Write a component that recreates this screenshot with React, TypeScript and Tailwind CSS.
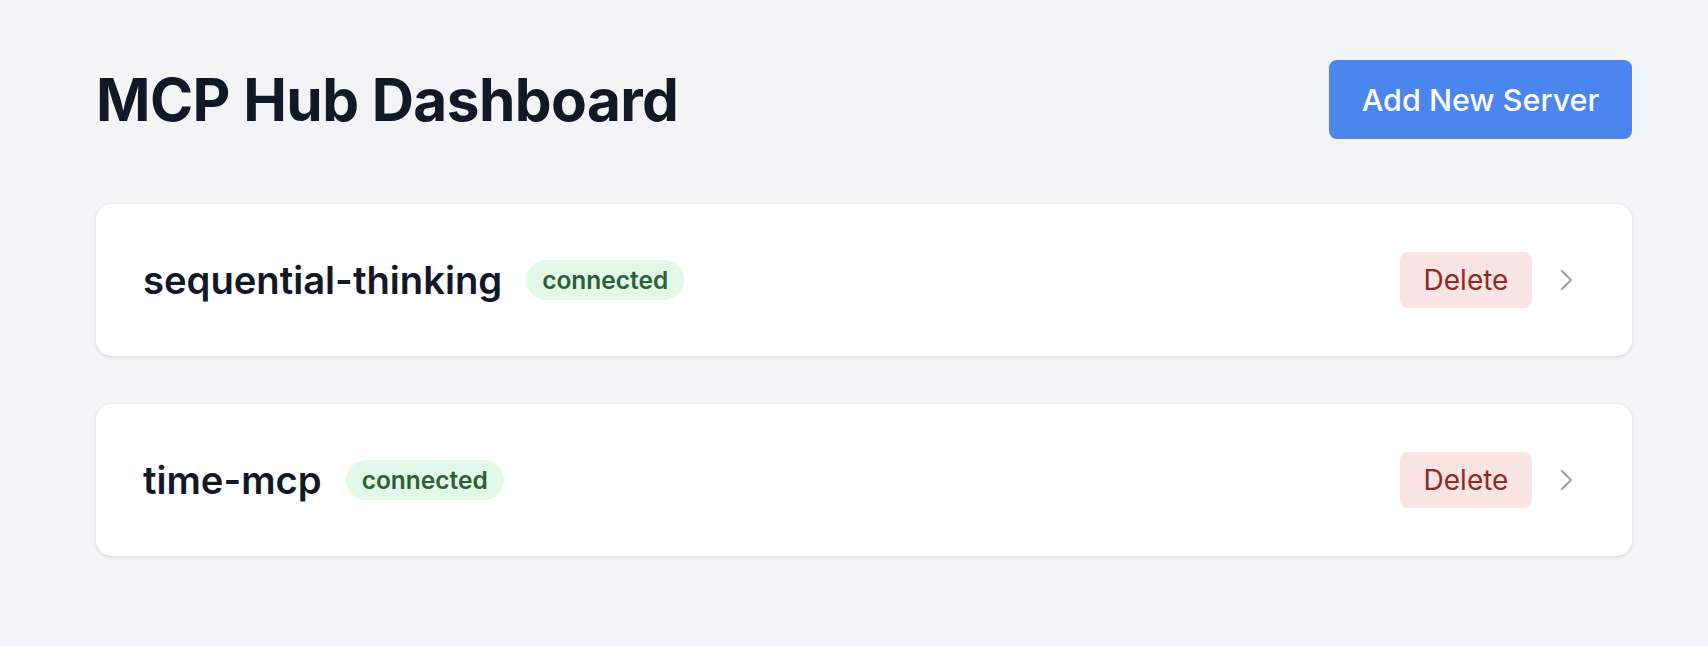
import React from "react";

type Server = { name: string; status: string };

const servers: Server[] = [
  { name: "sequential-thinking", status: "connected" },
  { name: "time-mcp", status: "connected" },
];

function Chevron() {
  return (
    <svg width="14" height="24" viewBox="0 0 14 24" fill="none" className="shrink-0">
      <path d="M2 3l9 9-9 9" stroke="#a3a3a3" strokeWidth="2.4" strokeLinecap="round" strokeLinejoin="round" />
    </svg>
  );
}

function ServerCard({ server }: { server: Server }) {
  return (
    <div className="flex h-[152px] items-center justify-between rounded-2xl bg-white pl-[47px] pr-[58px] shadow-[0_1px_4px_rgba(0,0,0,0.12)]">
      <div className="flex items-center gap-[24px]">
        <span className="text-[38.2px] font-semibold leading-none text-[#111827]">{server.name}</span>
        <span className="rounded-full bg-[#e1f8e8] px-4 py-[6px] text-[24.5px] font-semibold leading-[28px] text-[#2e5f36]">
          {server.status}
        </span>
      </div>
      <div className="flex items-center gap-7">
        <button className="h-14 w-[132px] rounded-lg bg-[#f9e3e3] text-[28px] text-[#8c2a24]">Delete</button>
        <Chevron />
      </div>
    </div>
  );
}

export default function App() {
  return (
    <div className="min-h-screen bg-[#f3f4f6] font-['Inter',sans-serif]">
      <div className="ml-[96px] w-[1536px] pt-[60px]">
        <div className="flex items-center justify-between">
          <h1 className="text-[58.5px] font-bold leading-[79px] tracking-[-0.01em] text-[#111827]">MCP Hub Dashboard</h1>
          <button className="h-[79px] w-[303px] rounded-lg bg-[#4b85ee] text-[30.5px] font-medium text-white">
            Add New Server
          </button>
        </div>
        <div className="mt-[65px] flex flex-col gap-12">
          {servers.map((s) => (
            <ServerCard key={s.name} server={s} />
          ))}
        </div>
      </div>
    </div>
  );
}
